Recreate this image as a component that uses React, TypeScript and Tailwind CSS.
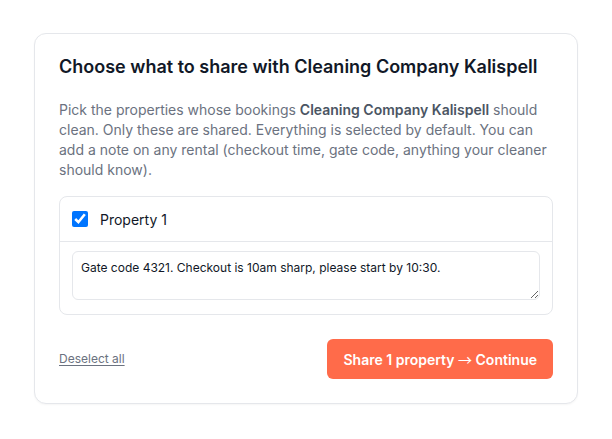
import React from "react";

export default function App() {
  return (
    <div className="min-h-[439px] bg-white px-[34px] pt-[33px] pb-9" style={{ fontFamily: "Inter, 'Noto Sans', sans-serif" }}>
      <div className="rounded-xl border border-[#e5e7eb] bg-white px-6 pt-[22px] pb-6 shadow-[0_1px_2px_rgba(0,0,0,0.04)]">
        <h2 className="text-[18px] font-semibold leading-[22px] text-[#111827]">
          Choose what to share with Cleaning Company Kalispell
        </h2>
        <p className="mt-[22px] text-[14px] leading-[20px] text-[#6b7280]">
          Pick the properties whose bookings <strong className="font-semibold text-[#4b5563]">Cleaning Company Kalispell</strong> should clean. Only these are shared. Everything is selected by default. You can add a note on any rental (checkout time, gate code, anything your cleaner should know).
        </p>
        <div className="mt-[16px] rounded-lg border border-[#e5e7eb]">
          <label className="flex items-center gap-3 border-b border-[#e5e7eb] px-3 h-[45px]">
            <input type="checkbox" defaultChecked className="h-4 w-4 m-0" />
            <span className="text-[14px] text-[#111827]">Property 1</span>
          </label>
          <div className="px-3 pt-[9px] pb-[14px]">
            <textarea
              rows={2}
              defaultValue="Gate code 4321. Checkout is 10am sharp, please start by 10:30."
              className="block h-[49px] w-full rounded-md border border-[#e5e7eb] px-2 py-[7px] text-[12px] leading-[18px] text-[#111827] outline-none"
            />
          </div>
        </div>
        <div className="mt-6 flex items-center justify-between">
          <button className="text-[12px] text-[#6b7280] underline underline-offset-2">Deselect all</button>
          <button className="h-10 rounded-md bg-[#ff6b4a] px-4 text-[14px] font-semibold text-white">
            Share 1 property <span style={{ fontFamily: "'Noto Sans CJK JP', sans-serif" }} className="font-normal">→</span> Continue
          </button>
        </div>
      </div>
    </div>
  );
}
